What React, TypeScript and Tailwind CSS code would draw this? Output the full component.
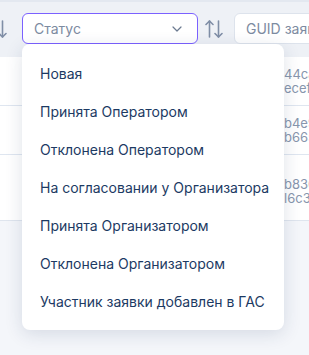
import { ChevronDown } from 'lucide-react';

const statuses = [
  'Новая',
  'Принята Оператором',
  'Отклонена Оператором',
  'На согласовании у Организатора',
  'Принята Организатором',
  'Отклонена Организатором',
  'Участник заявки добавлен в ГАС',
];

const rows = [
  { a: '44ca7d1e-', b: 'ecef1a90' },
  { a: 'b4e93c07-', b: 'b66524fd' },
  { a: 'b830f1d2-', b: 'l6c3a7e8' },
];

const SortArrows = ({ both = true }: { both?: boolean }) => (
  <svg width="18" height="20" viewBox="0 0 18 20" fill="none" stroke="#7f8ea6" strokeWidth="1.6" strokeLinecap="round" strokeLinejoin="round">
    {both && (
      <>
        <path d="M4.5 18V2" />
        <path d="M1 5.5L4.5 2L8 5.5" />
      </>
    )}
    <path d="M13.5 2v16" />
    <path d="M10 14.5l3.5 3.5 3.5-3.5" />
  </svg>
);

export default function App() {
  return (
    <div className="relative w-[309px] h-[355px] overflow-hidden bg-[#f4f6fa] font-['Inter',sans-serif]">
      {/* filter bar */}
      <div className="h-[57px] bg-[#eef1f6] border-t-[2px] border-[#e3e8f0] flex items-center gap-[6px] pb-[2px]">
        <div className="-ml-[11px] mr-[9px] flex items-center">
          <SortArrows both={false} />
        </div>
        <div className="w-[176px] h-[31px] shrink-0 rounded-[6px] border-[1.5px] border-[#7b61ff] bg-white flex items-center justify-between pl-[11px] pr-[12px]">
          <span className="text-[14px] text-[#7d8ba1]">Статус</span>
          <ChevronDown className="w-[16px] h-[16px] text-[#6b7a90]" strokeWidth={1.8} />
        </div>
        <div className="shrink-0 px-[1px]">
          <SortArrows />
        </div>
        <div className="ml-[4px] w-[120px] h-[31px] shrink-0 rounded-[6px] border border-[#dde3ec] bg-white flex items-center pl-[11px]">
          <span className="text-[14px] text-[#7d8ba1] whitespace-nowrap">GUID заявки</span>
        </div>
      </div>

      {/* table rows */}
      <div className="bg-white border-b border-[#dfe5ee]">
        {rows.map((r, i) => (
          <div
            key={i}
            className={`flex h-[49px] items-center ${i < rows.length - 1 ? 'border-b border-[#dfe6f0]' : 'h-[65px] pt-[6px]'}`}
          >
            <div className="w-[284px] shrink-0" />
            <div className="flex flex-col text-[13px] leading-[14px] text-[#8796ad] whitespace-nowrap">
              <span>{r.a}</span>
              <span>{r.b}</span>
            </div>
          </div>
        ))}
      </div>

      {/* status dropdown */}
      <div className="absolute left-[22px] top-[44px] w-[262px] rounded-[8px] bg-white py-[10px] shadow-[0_4px_18px_rgba(30,50,90,0.14)]">
        {statuses.map((s) => (
          <div key={s} className="h-[38px] flex items-center px-[18px] text-[14px] text-[#1c3a63] whitespace-nowrap">
            {s}
          </div>
        ))}
      </div>
    </div>
  );
}
